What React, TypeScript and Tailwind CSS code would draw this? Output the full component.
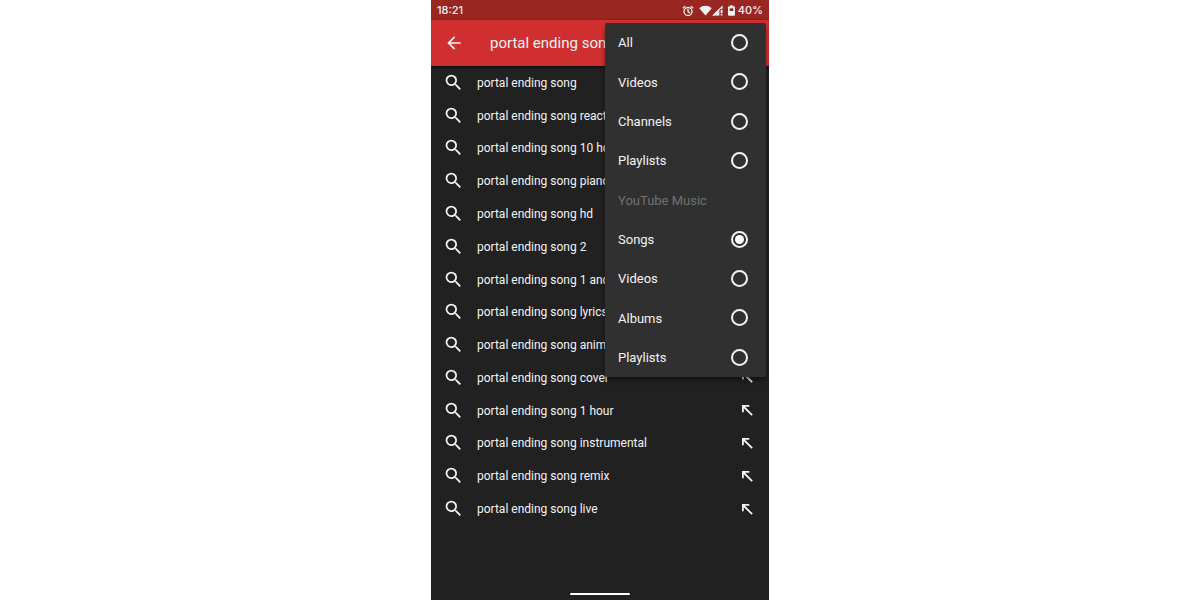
import { useState } from "react";
import { MdArrowBack, MdSearch } from "react-icons/md";

const suggestions = [
  "portal ending song",
  "portal ending song reaction",
  "portal ending song 10 hours",
  "portal ending song piano",
  "portal ending song hd",
  "portal ending song 2",
  "portal ending song 1 and 2",
  "portal ending song lyrics",
  "portal ending song animation",
  "portal ending song cover",
  "portal ending song 1 hour",
  "portal ending song instrumental",
  "portal ending song remix",
  "portal ending song live",
];

const generalFilters = [
  { id: "all", label: "All" },
  { id: "videos", label: "Videos" },
  { id: "channels", label: "Channels" },
  { id: "playlists", label: "Playlists" },
];

const musicFilters = [
  { id: "music_songs", label: "Songs" },
  { id: "music_videos", label: "Videos" },
  { id: "music_albums", label: "Albums" },
  { id: "music_playlists", label: "Playlists" },
];

function InsertArrow() {
  return (
    <svg viewBox="0 0 24 24" className="size-4" fill="currentColor">
      <path d="M4.5 15.5h2.7V9.2L18.8 20.8l1.9-1.9L9.1 7.3h6.4V4.6h-11z" />
    </svg>
  );
}

function StatusBar() {
  return (
    <div className="flex h-5 items-center justify-between bg-[#9a2621] px-[6px] pt-px font-['Inter',sans-serif] text-[11px] font-medium">
      <span>18:21</span>
      <div className="flex items-center">
        {/* Alarm */}
        <svg
          viewBox="0 0 24 24"
          className="mr-[5px] size-3"
          fill="none"
          stroke="currentColor"
          strokeWidth="2.6"
        >
          <circle cx="12" cy="13" r="8" />
          <path d="M12 8v5.5l3.8 2.3M1.8 6.3l4.7-4M22.2 6.3l-4.7-4" />
        </svg>
        {/* Wi-Fi */}
        <svg viewBox="0 0 14 12" className="h-[11px] w-[13px]" fill="currentColor">
          <path d="M7 11.5.2 3.6C2.1 1.6 4.4.8 7 .8s4.9.8 6.8 2.8z" />
        </svg>
        {/* Mobile signal */}
        <svg viewBox="0 0 12 12" className="size-[11px]" fill="currentColor">
          <path d="M11.5.5v4H9v7H.5z" fillOpacity="0.4" />
          <path d="M7.5 4.5v7h-7z" />
          <path d="M11.5.5V4H10v-.4l-8 7.9H.5z" />
          <path d="M9.5 5.5h2V9h-2zM9.5 10h2v1.5h-2z" />
        </svg>
        {/* Battery */}
        <svg viewBox="0 0 8 12" className="ml-[5px] mr-[3px] h-[11px] w-[7px]">
          <path
            fill="currentColor"
            fillRule="evenodd"
            d="M2.5 0h3v1.2h1.3Q8 1.2 8 2.4v8.4Q8 12 6.8 12H1.2Q0 12 0 10.8V2.4Q0 1.2 1.2 1.2h1.3zM2 3.4v3.2h4V3.4z"
          />
        </svg>
        <span>40%</span>
      </div>
    </div>
  );
}

interface FilterOptionProps {
  label: string;
  value: string;
  selected: string;
  onSelect: (value: string) => void;
}

function FilterOption({ label, value, selected, onSelect }: FilterOptionProps) {
  return (
    <label className="flex cursor-pointer items-center justify-between">
      <span className="pt-px">{label}</span>
      <input
        type="radio"
        name="filter"
        value={value}
        checked={selected === value}
        onChange={() => onSelect(value)}
        className="grid size-[17px] appearance-none place-items-center rounded-full border-2 border-[#f2f2f2] before:size-[9px] before:rounded-full checked:before:bg-white"
      />
    </label>
  );
}

export default function App() {
  const [query, setQuery] = useState("portal ending song");
  const [filter, setFilter] = useState("music_songs");

  return (
    <div className="min-h-screen bg-white font-['Roboto',sans-serif]">
      <div className="relative mx-auto flex min-h-screen w-full max-w-[338px] flex-col overflow-x-clip bg-[#212121] text-[#f2f2f2]">
        <StatusBar />

        <header className="flex h-[46px] items-center bg-[#cf302f] pl-[13px] shadow-sm shadow-black/60">
          <button aria-label="Back" className="mr-[26px]">
            <MdArrowBack className="size-5" />
          </button>
          <input
            type="text"
            aria-label="Search"
            value={query}
            onChange={(e) => setQuery(e.target.value)}
            className="min-w-0 flex-1 bg-transparent pt-px text-[15px] outline-none"
          />
        </header>

        <ul className="flex flex-1 flex-col text-xs">
          {suggestions.map((text) => (
            <li key={text} className="flex min-h-8 flex-1 items-center pl-3 pr-[14px]">
              <button
                className="flex flex-1 items-center gap-[13px] text-left"
                onClick={() => setQuery(text)}
              >
                <MdSearch className="size-[21px]" />
                <span className="pt-px">{text}</span>
              </button>
              <button aria-label={`Insert ${text}`} onClick={() => setQuery(text)}>
                <InsertArrow />
              </button>
            </li>
          ))}
        </ul>

        {/* Gesture bar */}
        <div className="flex h-[75px] items-end justify-center pb-[5px]">
          <div className="h-[2px] w-[60px] rounded-full bg-white" />
        </div>

        {/* Filter menu */}
        <fieldset className="absolute right-[3px] top-[23px] grid h-[354px] w-[161px] auto-rows-fr rounded-xs bg-[#303030] pl-[13px] pr-[18px] text-[13px] shadow-md shadow-black/40">
          {generalFilters.map((f) => (
            <FilterOption
              key={f.id}
              label={f.label}
              value={f.id}
              selected={filter}
              onSelect={setFilter}
            />
          ))}
          <div className="flex items-center pt-px text-[#707070]">YouTube Music</div>
          {musicFilters.map((f) => (
            <FilterOption
              key={f.id}
              label={f.label}
              value={f.id}
              selected={filter}
              onSelect={setFilter}
            />
          ))}
        </fieldset>
      </div>
    </div>
  );
}
